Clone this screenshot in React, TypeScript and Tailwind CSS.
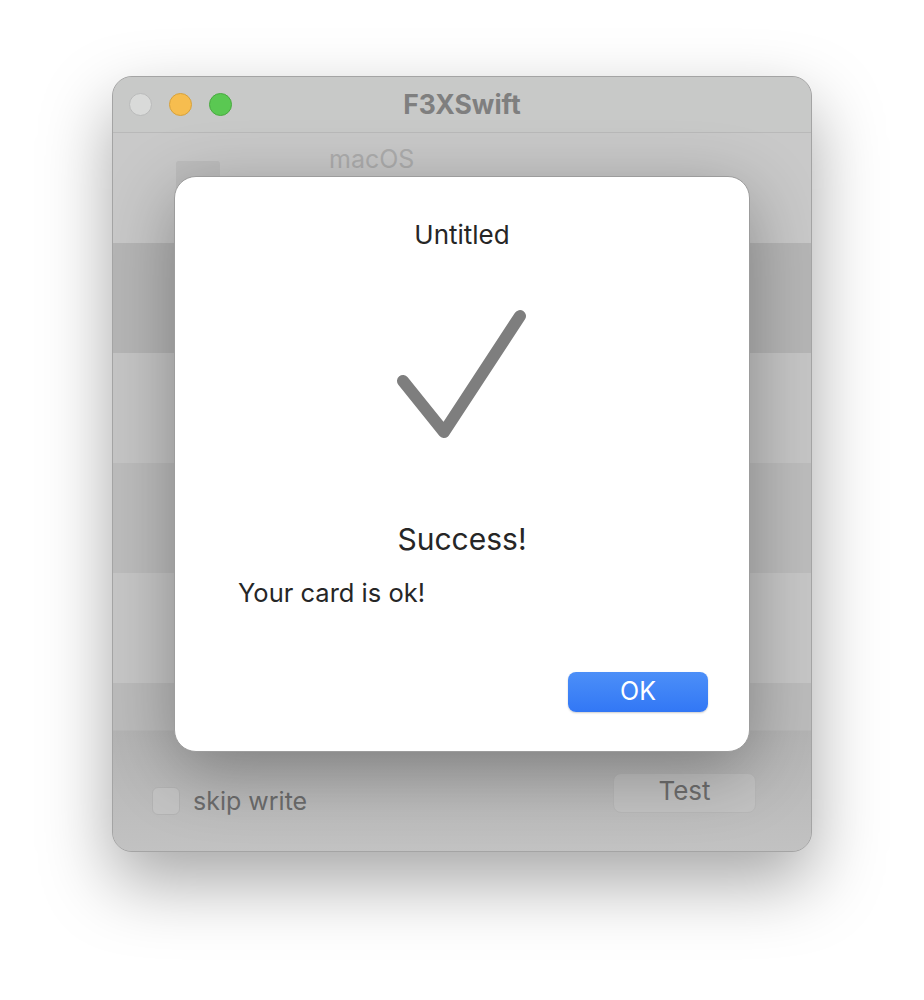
import React from "react";

const font = { fontFamily: "Inter, 'Noto Sans', 'Liberation Sans', sans-serif" };

function TrafficLights() {
  return (
    <div className="flex items-center gap-[17px]">
      <span className="block h-[23px] w-[23px] rounded-full border border-[#b9baba] bg-[#d9dad9]" />
      <span className="block h-[23px] w-[23px] rounded-full border border-[#d6a13c] bg-[#f6bd4f]" />
      <span className="block h-[23px] w-[23px] rounded-full border border-[#49a940] bg-[#5ac852]" />
    </div>
  );
}

function CheckMark() {
  return (
    <svg width="140" height="140" viewBox="0 0 140 140" fill="none">
      <path
        d="M11 75 L52 126 L128 10"
        stroke="#7e7e7e"
        strokeWidth="12"
        strokeLinecap="round"
        strokeLinejoin="round"
      />
    </svg>
  );
}

function AlertSheet() {
  return (
    <div className="absolute left-[61px] top-[99px] flex h-[576px] w-[576px] flex-col rounded-[22px] border border-[#9c9c9c] bg-white shadow-[0_18px_70px_rgba(0,0,0,0.32)]">
      <div className="pt-[43px] text-center text-[26px] leading-[30px] text-[#262626]">Untitled</div>
      <div className="mt-[56px] flex justify-center">
        <CheckMark />
      </div>
      <div className="mt-[75px] text-center text-[30px] leading-[36px] text-[#262626]">Success!</div>
      <div className="mt-[21px] pl-[63px] text-[25.5px] leading-[30px] text-[#262626]">Your card is ok!</div>
      <div className="mt-[64px] flex justify-end pr-[41px]">
        <button className="flex h-[40px] w-[140px] items-center justify-center rounded-[8px] bg-gradient-to-b from-[#4c8ff8] to-[#3277f5] text-[25px] text-white shadow-[0_1px_2px_rgba(0,0,0,0.2)]">
          OK
        </button>
      </div>
    </div>
  );
}

export default function App() {
  const rows = [
    { h: "h-[110px]", bg: "bg-[#c9c9c9]" },
    { h: "h-[110px]", bg: "bg-[#b6b6b6]" },
    { h: "h-[110px]", bg: "bg-[#c6c6c6]" },
    { h: "h-[110px]", bg: "bg-[#bdbdbd]" },
    { h: "h-[110px]", bg: "bg-[#c7c7c7]" },
    { h: "h-[47px]", bg: "bg-[#bcbcbc]" },
  ];
  return (
    <div className="h-[1000px] w-[924px] bg-white pl-[112px] pt-[76px]" style={font}>
      <div className="relative h-[776px] w-[700px] overflow-hidden rounded-[20px] border border-[#a4a4a4] bg-[#c4c4c4] shadow-[0_30px_70px_rgba(0,0,0,0.35)]">
        {/* title bar */}
        <div className="relative flex h-[56px] items-center border-b border-[#b9b9b9] bg-[#c8c9c8] pl-[16px]">
          <TrafficLights />
          <div className="absolute inset-x-0 top-[12px] text-center text-[26.5px] font-bold leading-[30px] text-[#7f7f7f]">
            F3XSwift
          </div>
        </div>
        {/* list rows */}
        <div className="flex flex-col">
          {rows.map((r, i) => (
            <div key={i} className={`${r.h} ${r.bg} relative`}>
              {i === 0 && (
                <div className="flex items-start pl-[63px] pt-[28px]">
                  <div className="h-[60px] w-[44px] rounded-[3px] bg-[#bebebe]" />
                  <div className="ml-[109px] mt-[-17px] text-[25px] leading-[30px] text-[#adadad]">macOS</div>
                </div>
              )}
            </div>
          ))}
        </div>
        {/* bottom bar */}
        <div className="flex h-[123px] items-start justify-between border-t border-[#b8b8b8] bg-gradient-to-b from-[#b4b4b4] to-[#c2c2c2] pl-[39px] pr-[55px]">
          <div className="mt-[55px] flex items-center gap-[13px]">
            <div className="h-[28px] w-[28px] rounded-[6px] border border-[#b4b4b4] bg-[#c4c4c4]" />
            <span className="text-[25px] leading-[30px] text-[#6c6c6c]">skip write</span>
          </div>
          <button className="mt-[42px] flex h-[40px] w-[143px] items-center justify-center rounded-[8px] border border-[#b8b8b8] bg-[#c3c3c3] pb-[5px] text-[26px] leading-[30px] text-[#6e6e6e]">
            Test
          </button>
        </div>
        <AlertSheet />
      </div>
    </div>
  );
}
